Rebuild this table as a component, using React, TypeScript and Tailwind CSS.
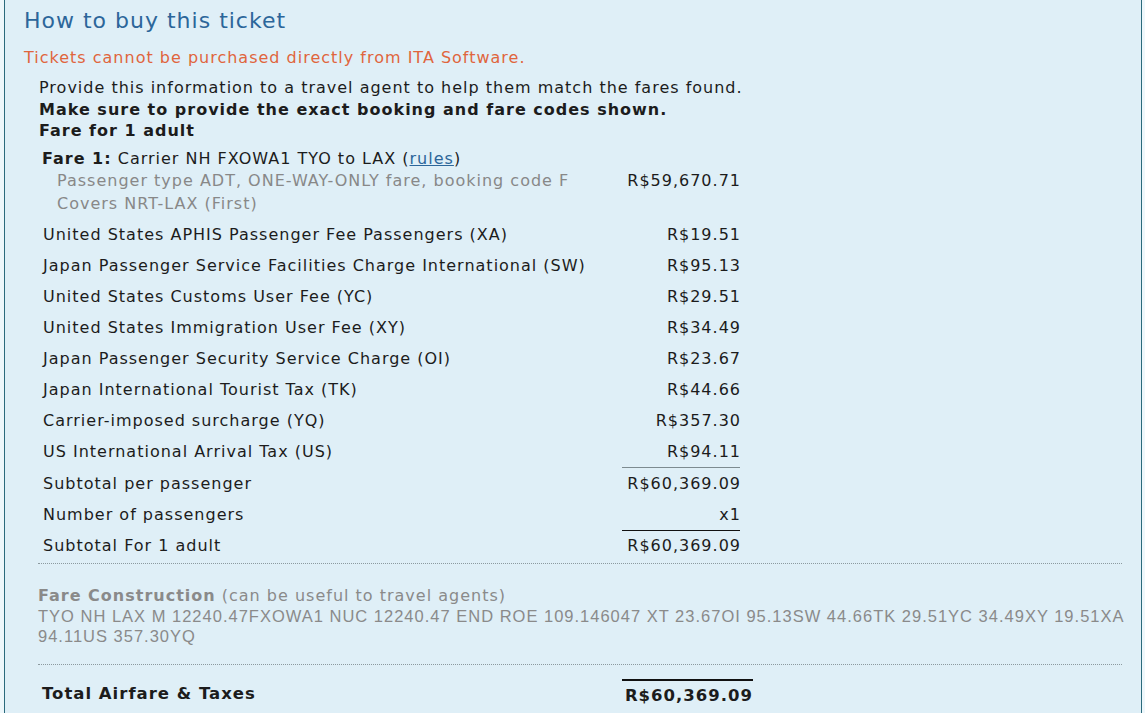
import React from "react";

const fees: [string, string][] = [
    ["United States APHIS Passenger Fee Passengers (XA)", "R$19.51"],
    ["Japan Passenger Service Facilities Charge International (SW)", "R$95.13"],
    ["United States Customs User Fee (YC)", "R$29.51"],
    ["United States Immigration User Fee (XY)", "R$34.49"],
    ["Japan Passenger Security Service Charge (OI)", "R$23.67"],
    ["Japan International Tourist Tax (TK)", "R$44.66"],
    ["Carrier-imposed surcharge (YQ)", "R$357.30"],
    ["US International Arrival Tax (US)", "R$94.11"],
];

function Row({label, amount}: { label: string, amount: string }) {
    return <div className="flex h-[31px] items-center">
        <span className="w-[580px] pl-[4px]">{label}</span>
        <span className="w-[122px] text-right">{amount}</span>
    </div>
}

export default function App() {
    return <div className="min-h-[713px] bg-[#eef7fb] pl-[4px] pr-[3px] tracking-[1px]"
                style={{fontFamily: '"DejaVu Sans", Verdana, sans-serif'}}>
        <div className="min-h-[713px] bg-[#dfeff7] border-x border-[#2b6a7c] text-[16px] text-[#1c1c1c]">
            <h1 className="pl-[19px] pt-[7px] text-[22px] leading-[28px] text-[#2c669a]">How to buy this ticket</h1>
            <div className="pl-[19px] mt-[12px] leading-[22px] text-[#e0653d]">
                Tickets cannot be purchased directly from ITA Software.
            </div>
            <div className="pl-[34px] pr-[10px] mt-[8px] leading-[21.5px]">
                <div>Provide this information to a travel agent to help them match the fares found.</div>
                <div className="font-bold">Make sure to provide the exact booking and fare codes shown.</div>
                <div className="font-bold">Fare for 1 adult</div>

                <div className="mt-[6px] leading-[22.5px]">
                    <div className="pl-[3px]"><b>Fare 1:</b> Carrier NH FXOWA1 TYO to LAX (<span
                        className="text-[#2c669a] underline">rules</span>)
                    </div>
                    <div className="flex">
                        <span className="w-[580px] pl-[18px] text-[#888888]">Passenger type ADT, ONE-WAY-ONLY fare, booking code F</span>
                        <span className="w-[122px] text-right">R$59,670.71</span>
                    </div>
                    <div className="pl-[18px] text-[#888888]">Covers NRT-LAX (First)</div>
                </div>

                <div className="mt-[4px]">
                    {fees.map(([l, a]) => <Row key={l} label={l} amount={a}/>)}
                    <div className="h-[1px] w-[702px] flex justify-end">
                        <div className="w-[118px] mr-[1px] bg-[#7d8b90]"/>
                    </div>
                    <Row label="Subtotal per passenger" amount="R$60,369.09"/>
                    <Row label="Number of passengers" amount="x1"/>
                    <div className="h-[1px] w-[702px] flex justify-end">
                        <div className="w-[118px] mr-[1px] bg-[#111111]"/>
                    </div>
                    <div className="flex h-[30px] items-center">
                        <span className="w-[580px] pl-[4px]">Subtotal For 1 adult</span>
                        <span className="w-[122px] text-right">R$60,369.09</span>
                    </div>
                </div>
            </div>

            <div className="ml-[33px] mr-[19px] border-t border-dotted border-[#8c9a9f] mt-[2px]"/>

            <div className="pl-[33px] mt-[22px] leading-[20px] text-[#8a8a8a]">
                <div><b>Fare Construction</b> (can be useful to travel agents)</div>
                <div style={{fontFamily: '"Liberation Sans", Arial, sans-serif'}} className="text-[16.5px]">
                    TYO NH LAX M 12240.47FXOWA1 NUC 12240.47 END ROE 109.146047 XT 23.67OI 95.13SW 44.66TK 29.51YC
                    34.49XY 19.51XA 94.11US 357.30YQ
                </div>
            </div>

            <div className="ml-[33px] mr-[19px] border-t border-dotted border-[#8c9a9f] mt-[18px]"/>

            <div className="pl-[37px] mt-[14px] flex items-stretch font-bold text-[16.5px]">
                <span className="w-[580px] pt-[3px]">Total Airfare &amp; Taxes</span>
                <span className="w-[131px] border-t-2 border-[#111111] pt-[3px] text-right">R$60,369.09</span>
            </div>
        </div>
    </div>
}
